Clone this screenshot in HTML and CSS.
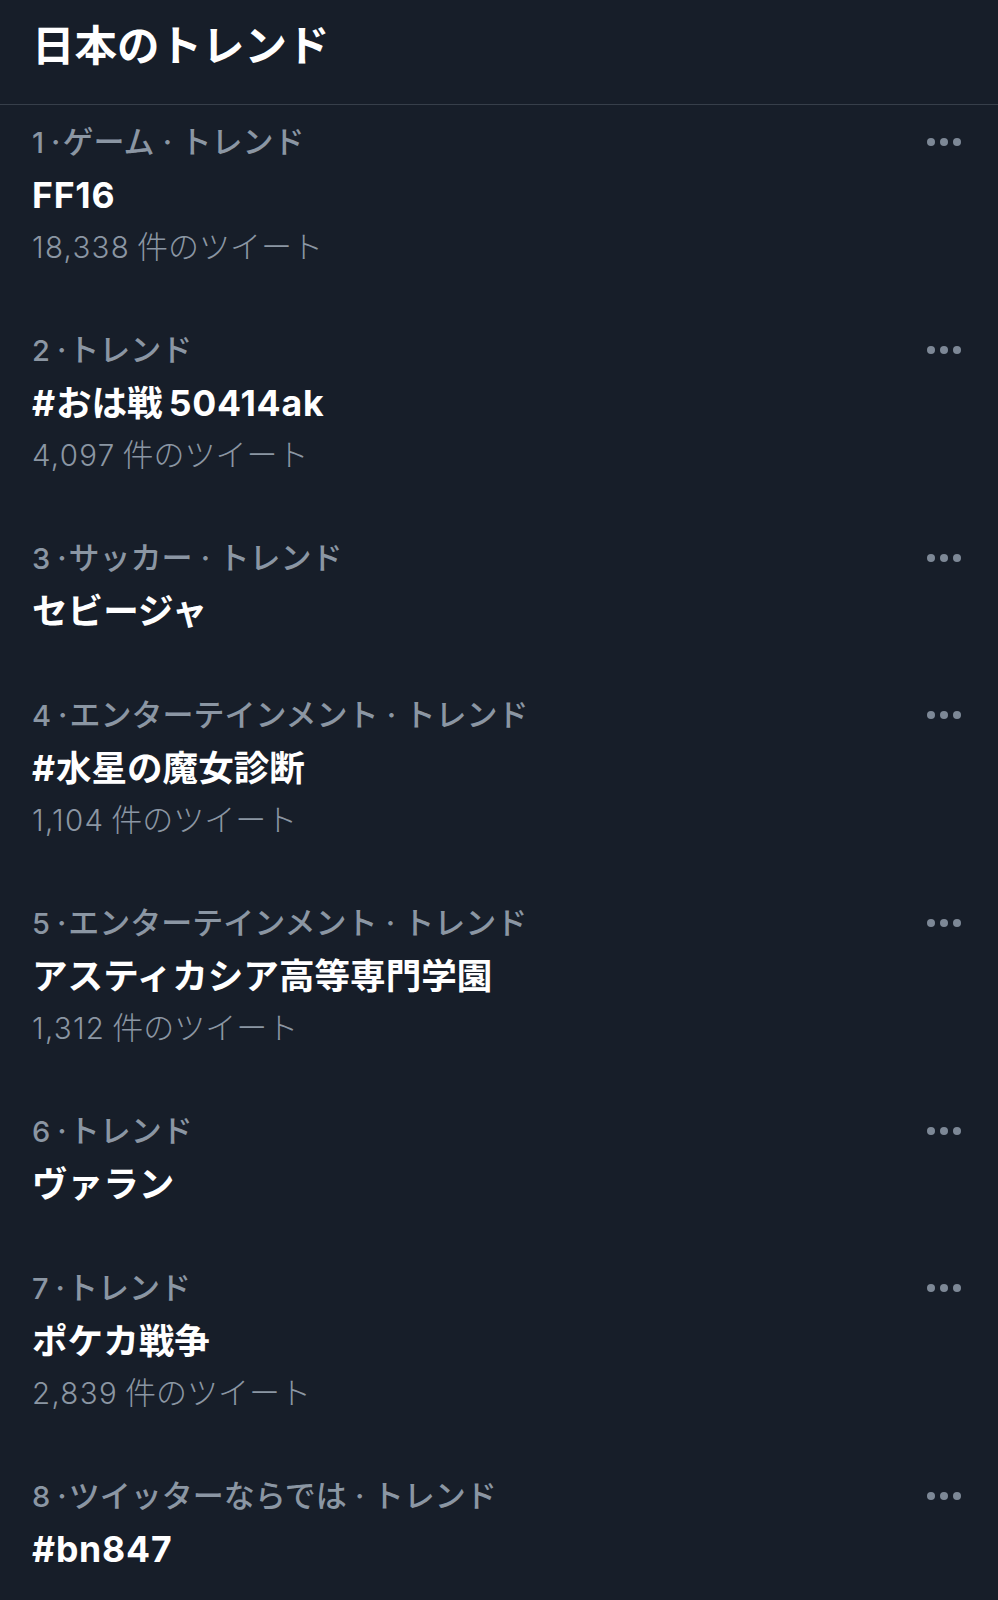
FILE: index.html
```html
<!DOCTYPE html>
<html lang="ja">
<head>
<meta charset="utf-8">
<title>日本のトレンド</title>
<link rel="stylesheet" href="styles.css">
</head>
<body>
<div class="page">
  <header class="header">
    <h1 class="header-title">日本のトレンド</h1>
  </header>
  <ul class="trends">
    <li class="trend">
      <div class="meta"><span><span class="num">1</span><span class="dot">·</span>ゲーム · トレンド</span><span class="more"><i></i><i></i><i></i></span></div>
      <div class="name"><span class="lat">FF16</span></div>
      <div class="count"><span class="digits">18,338</span>件のツイート</div>
    </li>
    <li class="trend">
      <div class="meta"><span><span class="num">2</span><span class="dot">·</span>トレンド</span><span class="more"><i></i><i></i><i></i></span></div>
      <div class="name"><span class="lat">#</span>おは戦<span class="gap"></span><span class="lat">50414ak</span></div>
      <div class="count"><span class="digits">4,097</span>件のツイート</div>
    </li>
    <li class="trend">
      <div class="meta"><span><span class="num">3</span><span class="dot">·</span>サッカー · トレンド</span><span class="more"><i></i><i></i><i></i></span></div>
      <div class="name">セビージャ</div>
    </li>
    <li class="trend">
      <div class="meta"><span><span class="num">4</span><span class="dot">·</span>エンターテインメント · トレンド</span><span class="more"><i></i><i></i><i></i></span></div>
      <div class="name"><span class="lat">#</span>水星の魔女診断</div>
      <div class="count"><span class="digits">1,104</span>件のツイート</div>
    </li>
    <li class="trend">
      <div class="meta"><span><span class="num">5</span><span class="dot">·</span>エンターテインメント · トレンド</span><span class="more"><i></i><i></i><i></i></span></div>
      <div class="name">アスティカシア高等専門学園</div>
      <div class="count"><span class="digits">1,312</span>件のツイート</div>
    </li>
    <li class="trend">
      <div class="meta"><span><span class="num">6</span><span class="dot">·</span>トレンド</span><span class="more"><i></i><i></i><i></i></span></div>
      <div class="name">ヴァラン</div>
    </li>
    <li class="trend">
      <div class="meta"><span><span class="num">7</span><span class="dot">·</span>トレンド</span><span class="more"><i></i><i></i><i></i></span></div>
      <div class="name">ポケカ戦争</div>
      <div class="count"><span class="digits">2,839</span>件のツイート</div>
    </li>
    <li class="trend">
      <div class="meta"><span><span class="num">8</span><span class="dot">·</span>ツイッターならでは · トレンド</span><span class="more"><i></i><i></i><i></i></span></div>
      <div class="name"><span class="lat">#bn847</span></div>
    </li>
  </ul>
</div>
</body>
</html>
```

FILE: styles.css
```css
* { box-sizing: border-box; }
html, body {
  margin: 0;
  padding: 0;
  background: #171e29;
}
body {
  font-family: Inter, "Noto Sans CJK JP", sans-serif;
  color: #ffffff;
}
.page {
  width: 998px;
  min-height: 1600px;
  background: #171e29;
}
.header {
  height: 105px;
  border-bottom: 1px solid #373f4a;
  padding: 0 32px 12px;
  display: flex;
  align-items: center;
}
.header-title {
  margin: 0;
  font-size: 42.5px;
  font-weight: 700;
  line-height: 1;
}
.trends {
  list-style: none;
  margin: 0;
  padding: 0;
}
.trend {
  padding: 9px 37px 41px 32px;
}
.meta {
  display: flex;
  justify-content: space-between;
  align-items: center;
  height: 51px;
  font-size: 31px;
  font-weight: 500;
  color: #8b96a3;
  white-space: nowrap;
}
.num {
  font-size: 29px;
}
.dot {
  margin: 0 2px 0 7px;
}
.more {
  display: flex;
  gap: 5px;
  align-items: center;
  margin-top: 5px;
}
.more i {
  display: block;
  width: 8px;
  height: 8px;
  border-radius: 50%;
  background: #7d8896;
}
.name {
  margin-top: 5px;
  height: 51px;
  line-height: 51px;
  font-size: 35.6px;
  font-weight: 700;
  color: #ffffff;
  white-space: nowrap;
}
.lat {
  letter-spacing: 0.8px;
}
.gap {
  display: inline-block;
  width: 6px;
}
.count {
  height: 51px;
  line-height: 51px;
  font-size: 31px;
  font-weight: 300;
  color: #8b96a3;
  white-space: nowrap;
}
.digits {
  font-size: 29.5px;
  letter-spacing: 1.3px;
  margin-right: 7px;
}
```
